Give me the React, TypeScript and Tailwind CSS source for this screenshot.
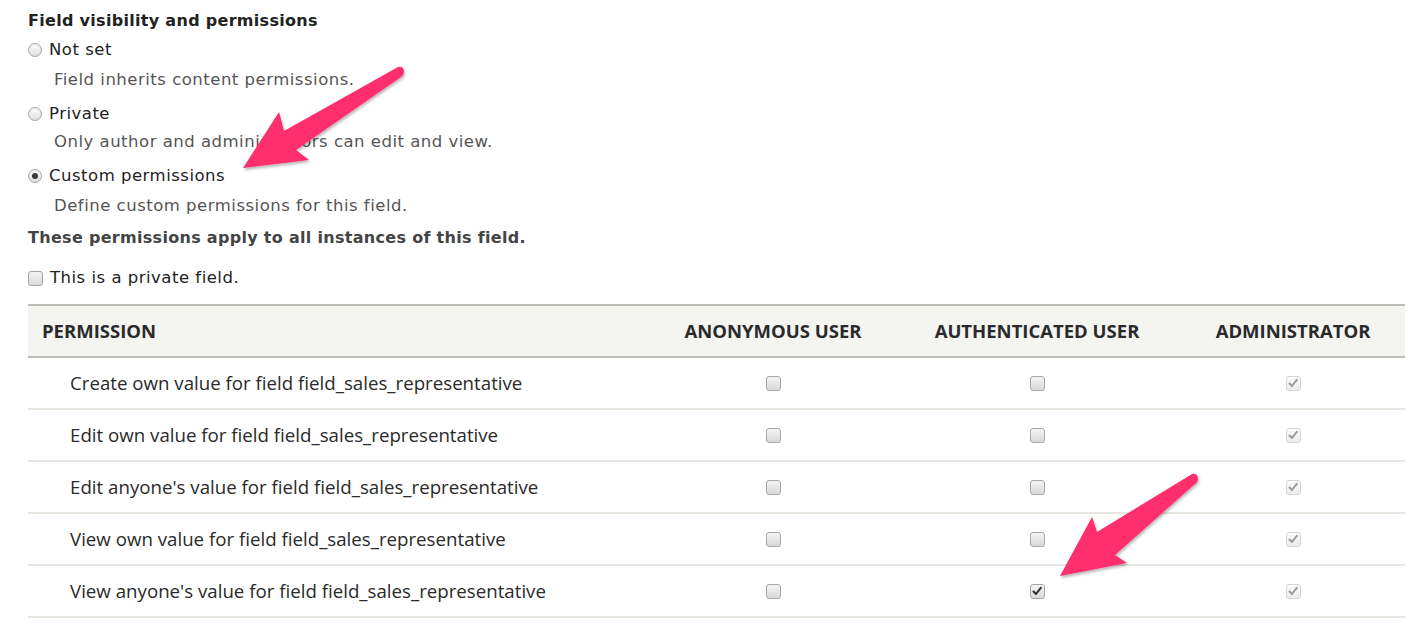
import React from 'react';

const rows: { label: string; auth: boolean }[] = [
  { label: 'Create own value for field field_sales_representative', auth: false },
  { label: 'Edit own value for field field_sales_representative', auth: false },
  { label: "Edit anyone's value for field field_sales_representative", auth: false },
  { label: 'View own value for field field_sales_representative', auth: false },
  { label: "View anyone's value for field field_sales_representative", auth: true },
];

function Radio({ checked }: { checked?: boolean }) {
  return (
    <span className="inline-flex h-[14px] w-[14px] shrink-0 items-center justify-center rounded-full border border-[#a9a9a9] bg-gradient-to-b from-[#fdfdfd] to-[#dcdcdc] shadow-[inset_0_1px_1px_rgba(0,0,0,0.08)]">
      {checked && <span className="h-[6px] w-[6px] rounded-full bg-[#3a3a3a]" />}
    </span>
  );
}

function Check({ checked, disabled }: { checked?: boolean; disabled?: boolean }) {
  return (
    <span
      className={`inline-flex h-[15px] w-[15px] shrink-0 items-center justify-center rounded-[3px] border ${
        disabled
          ? 'border-[#d4d4d4] bg-gradient-to-b from-[#fafafa] to-[#ececec]'
          : 'border-[#a6a6a6] bg-gradient-to-b from-[#f4f4f4] to-[#d9d9d9]'
      }`}
    >
      {checked && (
        <svg width="10" height="10" viewBox="0 0 10 10">
          <path
            d="M1.5 5.5 L4 8 L8.8 1.8"
            fill="none"
            stroke={disabled ? '#9a9a9a' : '#2b2b2b'}
            strokeWidth="2"
            strokeLinecap="round"
            strokeLinejoin="round"
          />
        </svg>
      )}
    </span>
  );
}

export default function App() {
  return (
    <div className="relative min-h-screen w-[1422px] bg-white pl-[28px] pt-[11px] text-[#222] [font-family:'DejaVu_Sans',sans-serif]">
      <div className="flex h-[20px] items-center text-[16px] font-bold tracking-[0.3px] text-[#222]">
        Field visibility and permissions
      </div>

      <div className="mt-[9px] flex h-[20px] items-center gap-[7px] text-[16.5px] tracking-[0.5px]">
        <Radio />
        <span>Not set</span>
      </div>
      <div className="mt-[10px] flex h-[20px] items-center pl-[26px] text-[16.5px] tracking-[0.5px] text-[#555]">
        Field inherits content permissions.
      </div>

      <div className="mt-[14px] flex h-[20px] items-center gap-[7px] text-[16.5px] tracking-[0.5px]">
        <Radio />
        <span>Private</span>
      </div>
      <div className="mt-[8px] flex h-[20px] items-center pl-[26px] text-[16.5px] tracking-[0.5px] text-[#555]">
        Only author and administrators can edit and view.
      </div>

      <div className="mt-[14px] flex h-[20px] items-center gap-[7px] text-[16.5px] tracking-[0.5px]">
        <Radio checked />
        <span>Custom permissions</span>
      </div>
      <div className="mt-[10px] flex h-[20px] items-center pl-[26px] text-[16.5px] tracking-[0.5px] text-[#555]">
        Define custom permissions for this field.
      </div>

      <div className="mt-[12px] flex h-[20px] items-center text-[16px] font-bold tracking-[0.3px] text-[#444]">
        These permissions apply to all instances of this field.
      </div>

      <div className="mt-[20px] flex h-[20px] items-center gap-[7px] text-[16.5px] tracking-[0.5px]">
        <Check />
        <span>This is a private field.</span>
      </div>

      <div className="mt-[16px] w-[1377px] [font-family:'Open_Sans',sans-serif]">
        <div className="grid h-[54px] grid-cols-[625px_240px_288px_224px] items-center border-y-2 border-[#bfbeb6] bg-[#f4f4f1] text-[18.5px] font-bold text-[#2a2a2a]">
          <div className="pl-[14px]">PERMISSION</div>
          <div className="text-center">ANONYMOUS USER</div>
          <div className="text-center">AUTHENTICATED USER</div>
          <div className="text-center">ADMINISTRATOR</div>
        </div>
        {rows.map((r) => (
          <div
            key={r.label}
            className="grid h-[52px] grid-cols-[625px_240px_288px_224px] items-center border-b-2 border-[#e6e5e0] text-[18.7px] text-[#2a2a2a]"
          >
            <div className="pl-[42px]">{r.label}</div>
            <div className="flex justify-center">
              <Check />
            </div>
            <div className="flex justify-center">
              <Check checked={r.auth} />
            </div>
            <div className="flex justify-center">
              <Check checked disabled />
            </div>
          </div>
        ))}
      </div>

      <svg
        className="pointer-events-none absolute left-0 top-0"
        width="1422"
        height="628"
        viewBox="0 0 1422 628"
      >
        <defs>
          <filter id="sh" x="-20%" y="-20%" width="140%" height="140%">
            <feDropShadow dx="1" dy="2" stdDeviation="1.5" floodColor="#000" floodOpacity="0.3" />
          </filter>
        </defs>
        <path
          d="M243 168 L279 112 L284 131 L398 67 Q404 66 404 72 Q404 75 401 77 L296 150 L309 160 Z"
          fill="#ff2d6d"
          filter="url(#sh)"
        />
        <path
          d="M1060 576 L1092 517 L1097 532 L1192 474 Q1198 473 1198 479 Q1198 482 1195 484 L1115 555 L1127 563 Z"
          fill="#ff2d6d"
          filter="url(#sh)"
        />
      </svg>
    </div>
  );
}
